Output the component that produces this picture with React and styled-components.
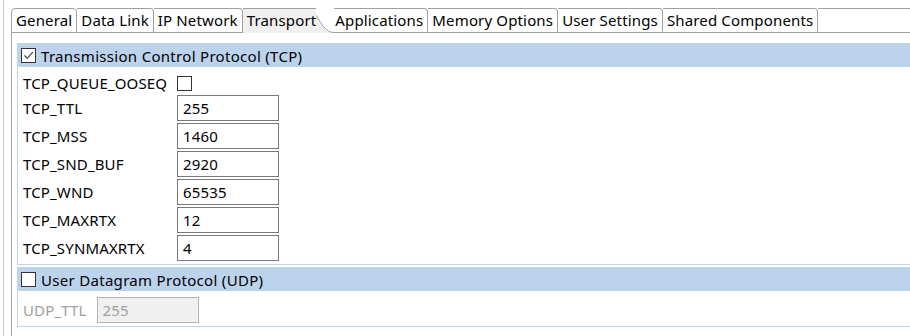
import styled, { createGlobalStyle } from "styled-components"

const Global = createGlobalStyle`
body{
  margin:0;
  background:#ffffff;
  font-family: "Noto Sans", "Open Sans", sans-serif;
  font-size:15px;
  letter-spacing:0.15px;
  color:#000000;
}
`

const tabs = ["General", "Data Link", "IP Network", "Transport", "Applications", "Memory Options", "User Settings", "Shared Components"]
const selected = "Transport"

const tcpRows = [
  ["TCP_TTL", "255"],
  ["TCP_MSS", "1460"],
  ["TCP_SND_BUF", "2920"],
  ["TCP_WND", "65535"],
  ["TCP_MAXRTX", "12"],
  ["TCP_SYNMAXRTX", "4"],
]

function Check({ checked }){
  return (
    <Box>
      {checked && (
        <svg width="13" height="13" viewBox="0 0 13 13">
          <path d="M2.5 6.5 L5.2 9.3 L10.8 3.2" fill="none" stroke="#333" strokeWidth="1.1"/>
        </svg>
      )}
    </Box>
  )
}

function Curve(){
  return (
    <CurveSvg width="30" height="25" viewBox="0 0 30 25">
      <path d="M0 0 L2 0 C14 0 16 24.5 30 24.5 L30 25 L0 25 Z" fill="#f0f0f0"/>
      <path d="M0 0.5 L2 0.5 C14 0.5 16 24.5 30 24.5" fill="none" stroke="#a0a0a0" strokeWidth="1"/>
    </CurveSvg>
  )
}

export default function App(){
  return (
    <Frame>
      <Global/>
      <Folder>
        <TabBar>
          {tabs.map((t, i) => t === selected ? (
            <SelTab key={t}>
              <SelLabel>{t}</SelLabel>
              <Curve/>
            </SelTab>
          ) : (
            <Tab key={t} $first={i === 0} $afterSel={tabs[i - 1] === selected}>{t}</Tab>
          ))}
          <Filler/>
        </TabBar>
        <Content>
          <Section>
            <Header><Check checked/><Title>Transmission Control Protocol (TCP)</Title></Header>
            <Grid>
              <Label>TCP_QUEUE_OOSEQ</Label>
              <Check/>
              {tcpRows.map(([k, v]) => [
                <Label key={k}>{k}</Label>,
                <Field key={k + "v"}>{v}</Field>
              ])}
            </Grid>
          </Section>
          <Section $gap>
            <Header><Check/><Title>User Datagram Protocol (UDP)</Title></Header>
            <Row>
              <Label $disabled>UDP_TTL</Label>
              <Field $disabled>255</Field>
            </Row>
          </Section>
        </Content>
      </Folder>
    </Frame>
  )
}

const Frame = styled.div`
height:336px;
margin-left:3px;
border-left:1px solid #c8c8c8;
padding-left:7px;
box-sizing:border-box;
overflow:hidden;
`

const Folder = styled.div`
display:flex;
flex-direction:column;
padding-top:8px;
height:100%;
box-sizing:border-box;
`

const TabBar = styled.div`
display:flex;
height:25px;
`

const Tab = styled.div`
box-sizing:border-box;
height:25px;
padding:0 4px 0 ${p => p.$afterSel ? "1px" : "4px"};
border-top:1px solid #a0a0a0;
border-right:1px solid #a0a0a0;
border-bottom:1px solid #a0a0a0;
border-left:${p => p.$first ? "1px solid #a0a0a0" : "none"};
border-top-right-radius:4px;
border-top-left-radius:${p => p.$first ? "4px" : "0"};
line-height:23px;
white-space:nowrap;
`

const SelTab = styled.div`
display:flex;
height:25px;
`

const SelLabel = styled.div`
position:relative;
z-index:1;
box-sizing:border-box;
height:25px;
padding-left:4px;
margin-right:-12px;
background:#f0f0f0;
border-top:1px solid #a0a0a0;
line-height:23px;
white-space:nowrap;
`

const CurveSvg = styled.svg`
display:block;
flex:none;
`

const Filler = styled.div`
flex:1;
box-sizing:border-box;
border-top:1px solid #a0a0a0;
border-bottom:1px solid #a0a0a0;
`

const Content = styled.div`
flex:1;
display:flex;
flex-direction:column;
border-left:1px solid #a0a0a0;
padding:10px 0 0 5px;
`

const Section = styled.div`
border:1px solid #bcd3eb;
border-right:none;
margin-top:${p => p.$gap ? "2px" : "0"};
`

const Header = styled.div`
display:flex;
align-items:center;
gap:5px;
height:23px;
margin-top:-1px;
padding-top:1px;
padding-left:3px;
background:#bcd3eb;
`

const Title = styled.span`
letter-spacing:0.3px;
`

const Box = styled.div`
box-sizing:border-box;
width:15px;
height:15px;
border:1px solid #333333;
background:#ffffff;
display:flex;
align-items:center;
justify-content:center;
`

const Grid = styled.div`
display:grid;
grid-template-columns:154px auto;
justify-content:start;
align-items:center;
row-gap:2px;
padding:6px 0 3px 5px;
`

const Row = styled.div`
display:flex;
align-items:center;
gap:10px;
padding:6px 0 3px 5px;
`

const Label = styled.div`
line-height:20px;
color:${p => p.$disabled ? "#a0a0a0" : "#000000"};
`

const Field = styled.div`
box-sizing:border-box;
width:102px;
height:26px;
padding-left:5px;
line-height:24px;
border:1px solid ${p => p.$disabled ? "#b4b4b4" : "#7a7a7a"};
background:${p => p.$disabled ? "#f0f0f0" : "#ffffff"};
color:${p => p.$disabled ? "#a0a0a0" : "#000000"};
`
